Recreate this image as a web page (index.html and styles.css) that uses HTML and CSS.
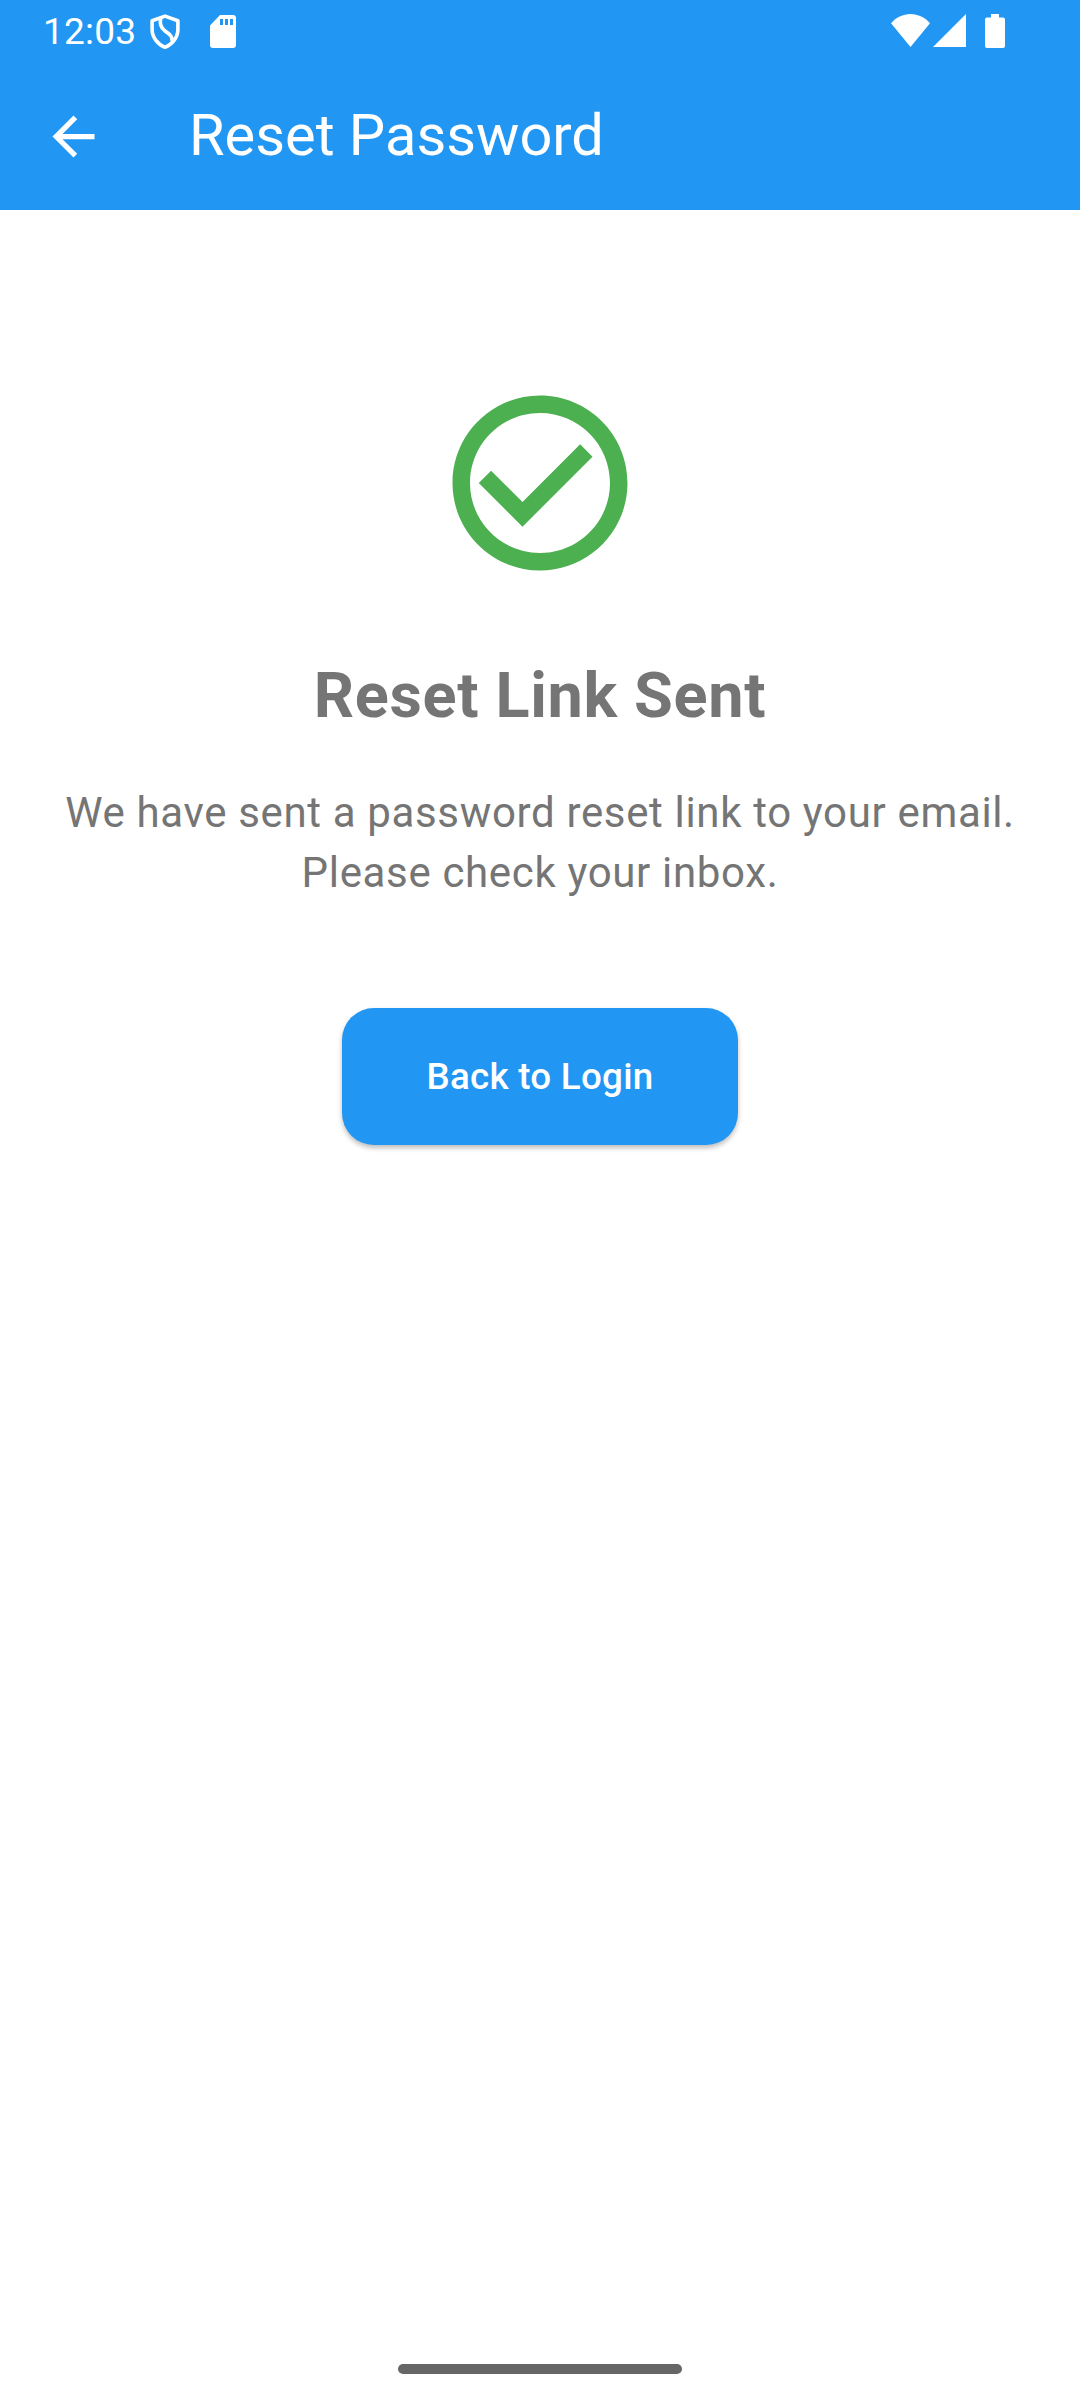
FILE: index.html
```html
<!DOCTYPE html>
<html lang="en">
<head>
<meta charset="utf-8">
<title>Reset Password</title>
<link rel="stylesheet" href="styles.css">
</head>
<body>
<div class="screen">
  <div class="status-bar">
    <span class="clock">12:03</span>
    <svg class="shield" viewBox="0 0 30 36" fill="none" stroke="#fff" stroke-width="3.6" stroke-linejoin="round">
      <path d="M15 2.1L27.9 6.8V15.5C27.9 23.5 22 30.5 15 33.3C8 30.5 2.1 23.5 2.1 15.5V6.8Z"/>
      <path d="M11 3.500C9.500 8 10.500 13 14.500 16.500C19 20 22.500 21.500 22 27"/>
    </svg>
    <svg class="sd-card" viewBox="0 0 26 33" fill="#fff">
      <path fill-rule="evenodd" d="M10 0H23Q26 0 26 3V30Q26 33 23 33H3Q0 33 0 30V10.500ZM10 4V10H13V4ZM15 4V10H18V4ZM20 4V10H23V4Z"/>
    </svg>
    <div class="system-icons">
      <svg class="wifi" viewBox="0 0 39 33" fill="#fff"><path d="M19.500 33L0 9.200C5 3.500 12 0 19.500 0S34 3.500 39 9.200Z"/></svg>
      <svg class="signal" viewBox="0 0 33 33" fill="#fff"><path d="M33 0V33H0Z"/></svg>
      <svg class="battery" viewBox="0 0 20 34" fill="#fff"><path d="M6 0H14V3.500H18Q20 3.500 20 5.500V32Q20 34 18 34H2Q0 34 0 32V5.500Q0 3.500 2 3.500H6Z"/></svg>
    </div>
  </div>
  <header class="app-bar">
    <svg class="back" viewBox="0 0 24 24" fill="#fff"><path d="M20 11H7.830l5.590-5.590L12 4l-8 8 8 8 1.410-1.410L7.830 13H20z"/></svg>
    <h1 class="title">Reset Password</h1>
  </header>
  <main class="content">
    <svg class="check" viewBox="0 0 24 24" fill="#4caf50"><path d="M16.590 7.580L10 14.170l-3.590-3.580L5 12l5 5 8-8zM12 2C6.480 2 2 6.480 2 12s4.480 10 10 10 10-4.480 10-10S17.520 2 12 2zm0 18c-4.420 0-8-3.580-8-8s3.580-8 8-8 8 3.580 8 8-3.580 8-8 8z"/></svg>
    <h2 class="heading">Reset Link Sent</h2>
    <p class="message">We have sent a password reset link to your email.<br>Please check your inbox.</p>
    <button class="login-button">Back to Login</button>
  </main>
  <div class="home-indicator"></div>
</div>
</body>
</html>
```
FILE: styles.css
```css
* { box-sizing: border-box; }

body {
  margin: 0;
  font-family: Roboto, sans-serif;
  background: #fff;
}

.screen {
  display: flex;
  flex-direction: column;
  width: 1080px;
  height: 2400px;
  padding-bottom: 26px;
}

.status-bar {
  display: flex;
  align-items: center;
  height: 63px;
  padding: 0 75px 0 43px;
  background: #2196f3;
}

.clock {
  width: 107px;
  color: #fff;
  font-size: 37px;
  line-height: 63px;
  letter-spacing: 0.2px;
}

.shield { width: 30px; height: 36px; }
.sd-card { width: 26px; height: 33px; margin-left: 30px; }

.system-icons {
  display: flex;
  align-items: flex-start;
  height: 35px;
  margin-left: auto;
}

.wifi { width: 39px; height: 33px; }
.signal { width: 33px; height: 33px; margin-left: 3px; }
.battery { width: 20px; height: 34px; margin-left: 19px; }

.app-bar {
  display: flex;
  align-items: center;
  gap: 84px;
  height: 147px;
  padding-left: 42px;
  background: #2196f3;
}

.back { width: 63px; height: 63px; }

.title {
  margin: 0;
  padding-bottom: 2px;
  color: #fff;
  font-size: 57.75px;
  font-weight: 400;
  line-height: 73px;
}

.content {
  display: flex;
  flex: 1;
  flex-direction: column;
  align-items: center;
  padding-top: 168px;
  color: #757575;
  text-align: center;
}

.check { width: 210px; height: 210px; }

.heading {
  margin: 63px 0 42px;
  font-size: 63px;
  font-weight: 700;
  line-height: 90px;
  letter-spacing: 0.656px;
}

.message {
  margin: 0 0 105px;
  font-size: 42px;
  line-height: 60px;
  letter-spacing: 0.656px;
}

.login-button {
  width: 396px;
  height: 137px;
  padding: 0;
  border: 0;
  border-radius: 32px;
  background: #2196f3;
  box-shadow: 0 3px 5px rgba(0, 0, 0, 0.26);
  color: #fff;
  font: 500 36.75px/52px Roboto, sans-serif;
  letter-spacing: 0.263px;
}

.home-indicator {
  align-self: center;
  width: 284px;
  height: 10px;
  border-radius: 5px;
  background: #666;
}
```
